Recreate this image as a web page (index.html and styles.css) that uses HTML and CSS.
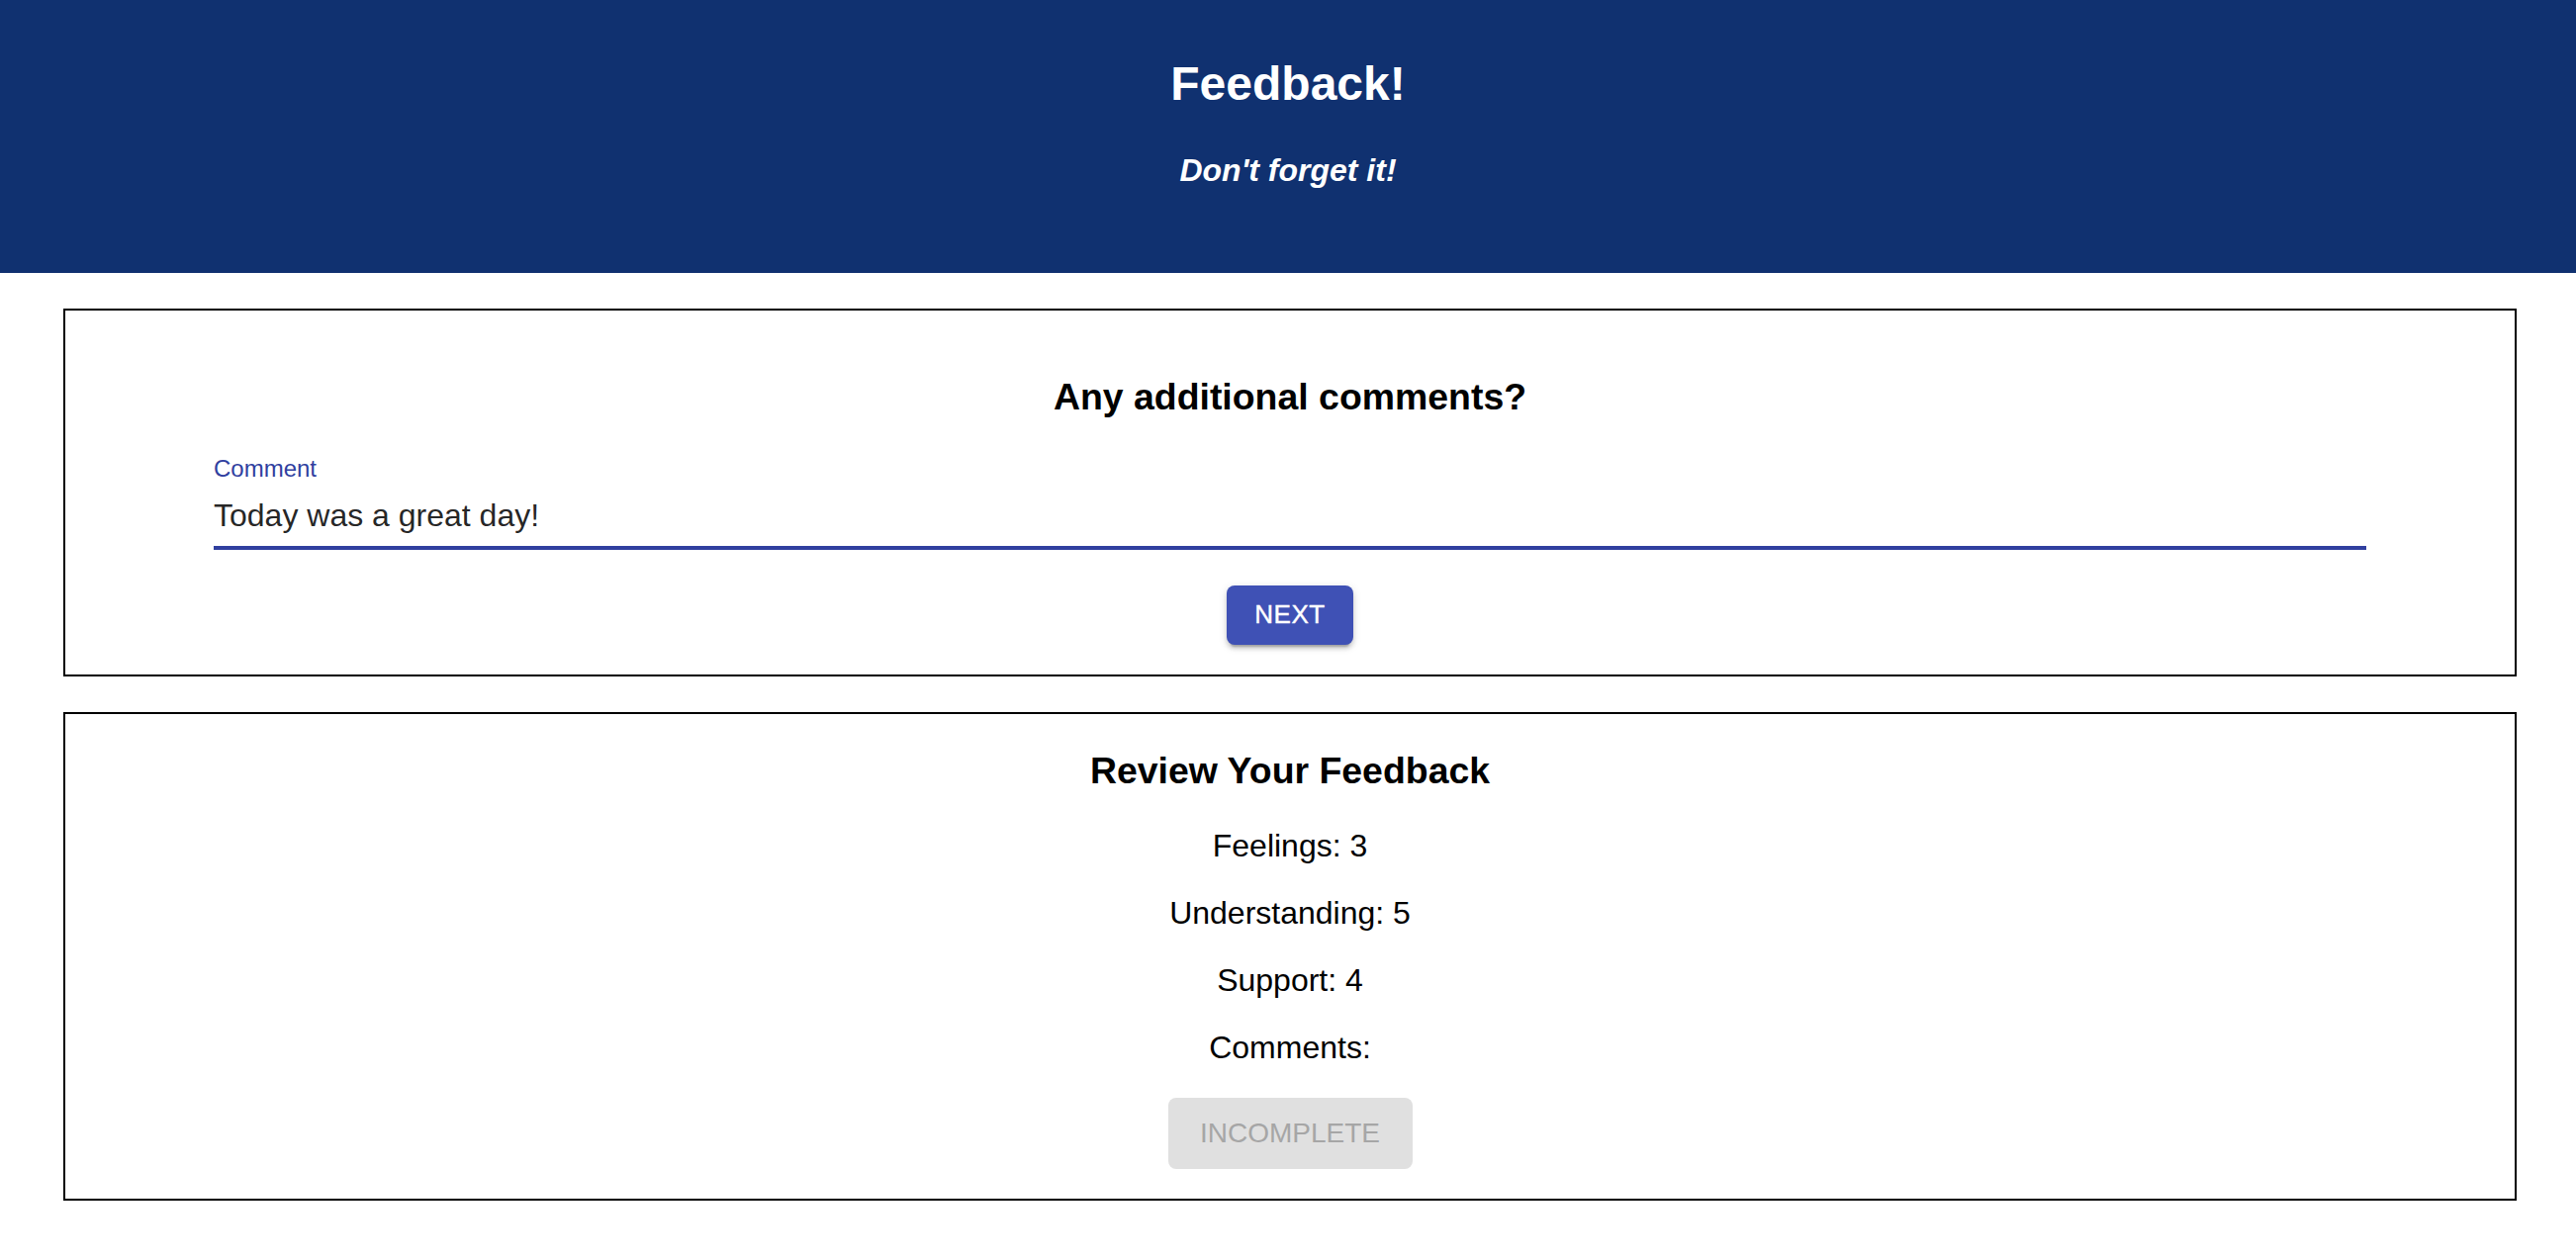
FILE: index.html
```html
<!DOCTYPE html>
<html lang="en">
<head>
<meta charset="utf-8">
<title>Feedback!</title>
<link rel="stylesheet" href="styles.css">
</head>
<body>
  <header class="app-header">
    <h1 class="app-title">Feedback!</h1>
    <h4 class="app-subtitle">Don't forget it!</h4>
  </header>
  <main class="content">
    <section class="card card-comment">
      <h3 class="card-heading">Any additional comments?</h3>
      <div class="text-field">
        <label class="field-label" for="comment">Comment</label>
        <div class="field-input">Today was a great day!</div>
      </div>
      <button class="btn btn-primary" type="button">Next</button>
    </section>
    <section class="card card-review">
      <h3 class="card-heading">Review Your Feedback</h3>
      <p class="review-item">Feelings: 3</p>
      <p class="review-item">Understanding: 5</p>
      <p class="review-item">Support: 4</p>
      <p class="review-item">Comments: </p>
      <button class="btn btn-disabled" type="button" disabled>Incomplete</button>
    </section>
  </main>
</body>
</html>
```

FILE: styles.css
```css
* { box-sizing: border-box; }

body {
  margin: 0;
  background: #ffffff;
  font-family: "Liberation Sans", Arial, Helvetica, sans-serif;
  color: #000;
}

.app-header {
  height: 276px;
  background: #103170;
  color: #fff;
  text-align: center;
  padding-top: 57px;
  display: flex;
  flex-direction: column;
  align-items: center;
}

.app-title {
  margin: 0;
  font-size: 48px;
  line-height: 55px;
  font-weight: 700;
}

.app-subtitle {
  margin: 42px 0 0;
  font-size: 32px;
  line-height: 37px;
  font-weight: 700;
  font-style: italic;
}

.content {
  padding: 36px 60px 0 64px;
  display: flex;
  flex-direction: column;
  gap: 36px;
}

.card {
  border: 2px solid #000;
  text-align: center;
  display: flex;
  flex-direction: column;
  align-items: center;
}

.card-comment {
  padding: 66px 150px 30px;
}

.card-review {
  padding: 36.5px 0 30px;
}

.card-heading {
  margin: 0;
  font-size: 37.44px;
  line-height: 43px;
  font-weight: 700;
}

.text-field {
  align-self: stretch;
  margin-top: 37.4px;
  text-align: left;
  display: flex;
  flex-direction: column;
}

.field-label {
  font-size: 24px;
  line-height: 28px;
  color: #303f9f;
}

.field-input {
  margin-top: 14.5px;
  font-size: 32px;
  line-height: 36px;
  padding-bottom: 13.1px;
  color: rgba(0, 0, 0, 0.87);
  border-bottom: 4px solid #303f9f;
}

.btn {
  border: none;
  font-family: "Liberation Sans", Arial, Helvetica, sans-serif;
  text-transform: uppercase;
  display: inline-flex;
  align-items: center;
  justify-content: center;
  border-radius: 8px;
}

.btn-primary {
  margin-top: 36px;
  height: 60px;
  min-width: 128px;
  padding: 0 20px;
  font-size: 26px;
  letter-spacing: 0.5px;
  background: #3f51b5;
  color: #fff;
  -webkit-text-stroke: 0.4px #fff;
  box-shadow: 0 6px 2px -4px rgba(0, 0, 0, 0.2), 0 4px 4px 0 rgba(0, 0, 0, 0.14), 0 2px 10px 0 rgba(0, 0, 0, 0.12);
}

.review-item {
  margin: 32px 0 0;
  font-size: 32px;
  line-height: 36px;
}

.card-heading + .review-item {
  margin-top: 35.5px;
}

.btn-disabled {
  margin-top: 33px;
  height: 72px;
  width: 247px;
  padding: 0;
  font-size: 28px;
  letter-spacing: 0;
  background: #e0e0e0;
  color: #a6a6a6;
}
```
